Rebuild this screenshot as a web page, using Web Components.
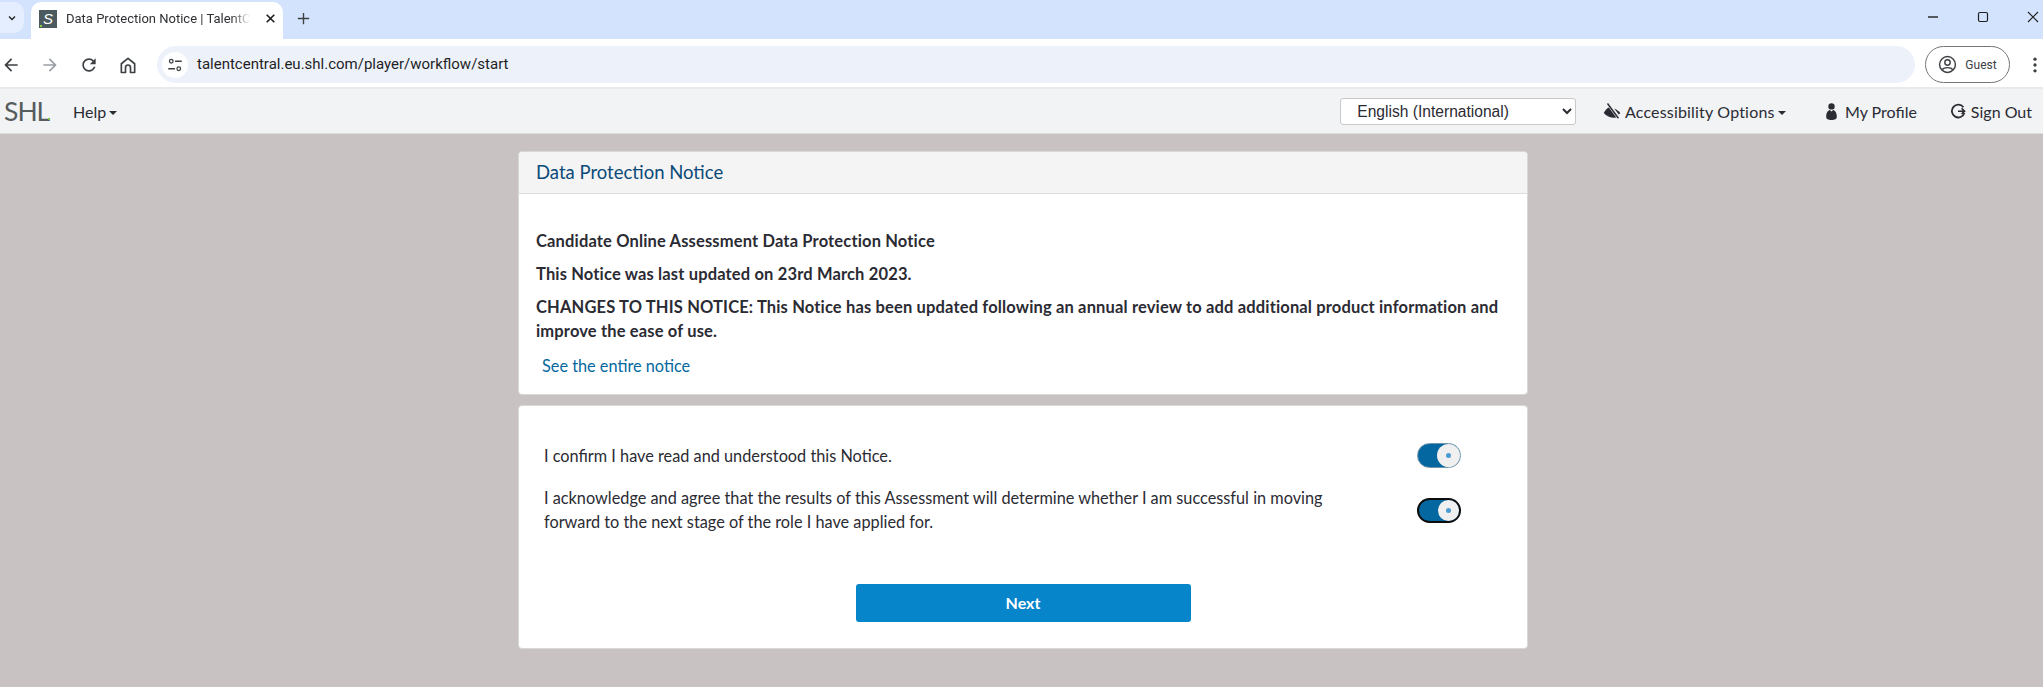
<!DOCTYPE html>
<html lang="en">
<head>
<meta charset="utf-8">
<title>Data Protection Notice | TalentCentral</title>
<style>
    html, body { margin: 0; height: 100%; }
    body {
        background: #c8c2c2;
        font-family: Lato, "Liberation Sans", sans-serif;
        color: #2b2b33;
        overflow: hidden;
    }
</style>
</head>
<body>
<browser-tabstrip title-text="Data Protection Notice | TalentC"></browser-tabstrip>
<browser-toolbar url="talentcentral.eu.shl.com/player/workflow/start"></browser-toolbar>
<shl-navbar></shl-navbar>
<notice-page>
    <notice-card heading="Data Protection Notice">
        <p class="strong">Candidate Online Assessment Data Protection Notice</p>
        <p class="strong">This Notice was last updated on 23rd March 2023.</p>
        <p class="strong">CHANGES TO THIS NOTICE: This Notice has been updated following an annual review to add additional product information and improve the ease of use.</p>
        <a class="more">See the entire notice</a>
    </notice-card>
    <consent-card>
        <consent-row>I confirm I have read and understood this Notice.</consent-row>
        <consent-row focused>I acknowledge and agree that the results of this Assessment will determine whether I am successful in moving forward to the next stage of the role I have applied for.</consent-row>
    </consent-card>
</notice-page>

<script>
// icons {{{1

const svg = (body, size = 24, box = '0 0 24 24') =>
    `<svg width="${size}" height="${size}" viewBox="${box}" aria-hidden="true">${body}</svg>`;

const ICONS = {
    chevron: svg('<path d="M6 9l6 6 6-6" fill="none" stroke="#1f1f1f" stroke-width="2.6"/>', 12),
    close: svg('<path d="M5 5l14 14M19 5L5 19" stroke="#1f1f1f" stroke-width="3"/>', 13),
    plus: svg('<path d="M12 3v18M3 12h18" stroke="#3c4043" stroke-width="2.2"/>', 15),
    minimize: svg('<path d="M1 6h10" stroke="#1f1f1f" stroke-width="1.4"/>', 12, '0 0 12 12'),
    maximize: svg('<rect x="1.5" y="1.5" width="9" height="9" rx="1.5" fill="none" stroke="#1f1f1f" stroke-width="1.2"/>', 12, '0 0 12 12'),
    winClose: svg('<path d="M1 1l10 10M11 1L1 11" stroke="#1f1f1f" stroke-width="1.1"/>', 12, '0 0 12 12'),
    back: svg('<path d="M20 11H7.83l5.59-5.59L12 4l-8 8 8 8 1.41-1.41L7.83 13H20v-2z" fill="#3c4043"/>', 20),
    forward: svg('<path d="M4 11h12.17l-5.59-5.59L12 4l8 8-8 8-1.41-1.41L16.17 13H4v-2z" fill="#9aa0a6"/>', 20),
    reload: svg('<path d="M17.65 6.35C16.2 4.9 14.21 4 12 4c-4.42 0-7.99 3.58-7.99 8s3.57 8 7.99 8c3.73 0 6.84-2.55 7.73-6h-2.08c-.82 2.33-3.04 4-5.65 4-3.31 0-6-2.69-6-6s2.69-6 6-6c1.66 0 3.14.69 4.22 1.78L13 11h7V4l-2.35 2.35z" fill="#3c4043"/>', 20),
    home: svg('<path d="M4 21V10.5L12 4l8 6.5V21h-5v-6a3 3 0 0 0-6 0v6z" fill="none" stroke="#3c4043" stroke-width="2" stroke-linejoin="round"/>', 20),
    tune: svg('<circle cx="7" cy="7" r="2.4" fill="none" stroke="#3c4043" stroke-width="1.7"/><path d="M12 7h9M3 17h9" stroke="#3c4043" stroke-width="1.9"/><circle cx="17" cy="17" r="2.4" fill="none" stroke="#3c4043" stroke-width="1.7"/>', 18),
    guest: svg('<circle cx="12" cy="12" r="10" fill="none" stroke="#3c4043" stroke-width="1.8"/><circle cx="12" cy="9.5" r="3.4" fill="none" stroke="#3c4043" stroke-width="1.8"/><path d="M5.5 18.5c2-3.4 11-3.4 13 0" fill="none" stroke="#3c4043" stroke-width="1.8"/>', 19),
    dots: svg('<circle cx="12" cy="5" r="2" fill="#3c4043"/><circle cx="12" cy="12" r="2" fill="#3c4043"/><circle cx="12" cy="19" r="2" fill="#3c4043"/>', 20),
    // slashed eye, the way the site draws it: heavy lens, slash standing off it
    eyeSlash: svg('<path d="M1 14.5C3.5 10 6 7.5 9 6.5l11 13.2c-1.6.8-3.2 1.3-5 1.3-5.6 0-10.6-2.6-14-6.5z" fill="#2b2b33"/><path d="M15 8.6c3.2 1.3 5.8 3.5 8 5.9-.5.8-1.3 1.6-2 2.2z" fill="#2b2b33"/><path d="M6.5 2.5l14 19" stroke="#f1f3f5" stroke-width="3.4"/><path d="M6 2l14.6 19.6" stroke="#2b2b33" stroke-width="1.9"/>', 18),
    person: svg('<circle cx="6" cy="3.2" r="3" fill="#2b2b33"/><path d="M1 13c0-4 1.6-6 3.4-6.4L6 8l1.6-1.4C9.4 7 11 9 11 13c0 2.4-2 3-5 3s-5-.6-5-3z" fill="#2b2b33"/>', 17, '0 0 12 16'),
    signOut: svg('<path d="M13.4 4.2A6.4 6.4 0 1 0 14.4 10" fill="none" stroke="#2b2b33" stroke-width="1.8"/><path d="M8 8.2h6.6M11.6 5.4l3 2.8-3 2.8" fill="none" stroke="#2b2b33" stroke-width="1.6"/>', 16, '0 0 16 16'),
};

// helper for the small boilerplate that every element shares
function defineElement(name, css, html, extra = {}) {
    const tpl = document.createElement('template');
    tpl.innerHTML = `<style>${css}</style>${html}`;
    class El extends HTMLElement {
        constructor() {
            super();
            this.attachShadow({ mode: 'open' });
            this.shadowRoot.appendChild(tpl.content.cloneNode(true));
        }
        connectedCallback() {
            if (extra.init) extra.init.call(this, this.shadowRoot);
        }
    }
    customElements.define(name, El);
}

// browser chrome {{{1

defineElement('browser-tabstrip', `
    :host {
        display: flex;
        align-items: flex-start;
        height: 39px;
        background: #d3e3fd;
        font-family: Roboto, sans-serif;
    }
    .tabs-btn {
        width: 24px;
        height: 31px;
        margin-top: 2px;
        border-radius: 0 10px 10px 0;
        background: #e4eefe;
        display: flex;
        align-items: center;
        justify-content: center;
    }
    .tab {
        box-sizing: border-box;
        width: 252px;
        height: 37px;
        margin: 2px 0 0 7px;
        padding: 0 11px 0 8px;
        background: #fff;
        border-radius: 10px 10px 0 0;
        display: flex;
        align-items: center;
        gap: 9px;
        padding-bottom: 4px;
    }
    .favicon {
        position: relative;
        flex: none;
        width: 18px;
        height: 18px;
        background: #4b5a5e;
        color: #fff;
        font: italic 15px/18px "Liberation Sans", sans-serif;
        text-align: center;
    }
    .favicon i {
        position: absolute;
        left: 1px;
        bottom: 1px;
        width: 2px;
        height: 2px;
        background: #8bd04a;
    }
    .title {
        flex: 1;
        font-size: 13px;
        color: #2f3033;
        white-space: nowrap;
        -webkit-mask-image: linear-gradient(to right, #000 90%, transparent);
        mask-image: linear-gradient(to right, #000 90%, transparent);
    }
    .close { display: flex; margin-left: 5px; }
    .plus { display: flex; margin: 11px 0 0 13px; }
    .spacer { flex: 1; }
    .win { display: flex; gap: 38px; margin: 11px 4px 0 0; }
`, `
    <div class="tabs-btn">${ICONS.chevron}</div>
    <div class="tab">
        <span class="favicon">S<i></i></span>
        <span class="title"></span>
        <span class="close">${ICONS.close}</span>
    </div>
    <span class="plus">${ICONS.plus}</span>
    <span class="spacer"></span>
    <span class="win">${ICONS.minimize}${ICONS.maximize}${ICONS.winClose}</span>
`, {
    init(root) { root.querySelector('.title').textContent = this.getAttribute('title-text'); }
});

defineElement('browser-toolbar', `
    :host {
        box-sizing: border-box;
        display: flex;
        align-items: center;
        height: 50px;
        padding: 3px 0 0 1px;
        background: #fff;
        border-bottom: 2px solid #e8e9eb;
        font-family: Roboto, sans-serif;
    }
    .nav { display: flex; gap: 19px; }
    .nav span { display: flex; }
    .omni {
        flex: 1;
        height: 37px;
        margin-left: 19px;
        border-radius: 19px;
        background: #edf2fa;
        display: flex;
        align-items: center;
        padding-left: 5px;
        font-size: 15px;
        color: #1f1f1f;
    }
    .site {
        width: 26px;
        height: 26px;
        border-radius: 50%;
        background: #fff;
        display: flex;
        align-items: center;
        justify-content: center;
        margin-right: 9px;
    }
    .url { padding-bottom: 2px; }
    .guest {
        box-sizing: border-box;
        width: 85px;
        height: 37px;
        margin-left: 10px;
        border: 1px solid #747775;
        border-radius: 19px;
        display: flex;
        align-items: center;
        justify-content: center;
        gap: 8px;
        font-size: 12px;
        color: #3c4043;
    }
    .dots { display: flex; margin: 0 -2px 0 15px; }
`, `
    <div class="nav">
        <span>${ICONS.back}</span><span>${ICONS.forward}</span><span>${ICONS.reload}</span><span>${ICONS.home}</span>
    </div>
    <div class="omni"><span class="site">${ICONS.tune}</span><span class="url"></span></div>
    <div class="guest">${ICONS.guest}<span>Guest</span></div>
    <span class="dots">${ICONS.dots}</span>
`, {
    init(root) { root.querySelector('.url').textContent = this.getAttribute('url'); }
});

// site header {{{1

defineElement('shl-navbar', `
    :host {
        box-sizing: border-box;
        display: flex;
        align-items: center;
        height: 45px;
        padding: 0 11px 0 4px;
        background: #f1f3f5;
        border-bottom: 1px solid #dcdcdc;
        font-size: 16px;
        color: #2b2b33;
    }
    .logo {
        position: relative;
        width: 46px;
        font: 400 26.5px/1 Lato, sans-serif;
        letter-spacing: -1px;
        color: #565b5e;
    }
    .logo i {
        position: absolute;
        right: 0;
        bottom: 4px;
        width: 2px;
        height: 2px;
        background: #7ac143;
    }
    .help { margin-left: 23px; }
    .caret {
        display: inline-block;
        margin-left: 3px;
        vertical-align: middle;
        border-top: 4px solid #2b2b33;
        border-left: 4px solid transparent;
        border-right: 4px solid transparent;
    }
    .spacer { flex: 1; }
    select {
        box-sizing: border-box;
        width: 236px;
        height: 27px;
        padding-left: 12px;
        border: 1px solid #c9c9c9;
        border-radius: 3px;
        background: #fff;
        font: 15.6px "Liberation Sans", sans-serif;
        color: #2b2b33;
    }
    .item { display: flex; align-items: center; gap: 5px; white-space: nowrap; }
    .item svg { flex: none; }
    .a11y { margin-left: 27px; gap: 3.7px; letter-spacing: 0.18px; }
    .profile { margin-left: 37.4px; }
    .signout { margin-left: 33px; }
`, `
    <span class="logo">SHL<i></i></span>
    <span class="help">Help<span class="caret"></span></span>
    <span class="spacer"></span>
    <select><option>English (International)</option></select>
    <span class="item a11y">${ICONS.eyeSlash}<span>Accessibility Options<span class="caret"></span></span></span>
    <span class="item profile">${ICONS.person}<span>My Profile</span></span>
    <span class="item signout">${ICONS.signOut}<span>Sign Out</span></span>
`);

// page content {{{1

defineElement('notice-page', `
    :host {
        display: flex;
        flex-direction: column;
        align-items: center;
        gap: 10px;
        padding: 17px 0 0 3px;
    }
`, `<slot></slot>`);

const CARD_CSS = `
    :host {
        box-sizing: border-box;
        display: block;
        width: 1010px;
        background: #fff;
        border: 1px solid #d8d8d8;
        border-radius: 4px;
    }
`;

defineElement('notice-card', CARD_CSS + `
    .head {
        box-sizing: border-box;
        height: 42px;
        padding: 0 17px;
        background: #f4f4f4;
        border-bottom: 1px solid #dddddd;
        border-radius: 4px 4px 0 0;
        font-size: 18.5px;
        line-height: 40px;
        color: #0b4a78;
    }
    .body {
        padding: 35px 17px 16px;
        font-size: 16.5px;
        line-height: 24px;
    }
    ::slotted(p) { margin: 0 0 9px; }
    ::slotted(p.strong) { font-weight: 700; letter-spacing: 0.15px; }
    ::slotted(a.more) {
        display: block;
        margin-top: 11px;
        padding-left: 6px;
        font-size: 16.3px;
        color: #0668a0;
    }
`, `
    <div class="head"></div>
    <div class="body"><slot></slot></div>
`, {
    init(root) { root.querySelector('.head').textContent = this.getAttribute('heading'); }
});

defineElement('consent-card', CARD_CSS + `
    :host { padding: 37px 66px 26px 25px; }
    .rows { display: flex; flex-direction: column; gap: 18px; }
    .actions { display: flex; justify-content: center; margin: 50px -41px 0 0; }
    .next {
        box-sizing: border-box;
        width: 335px;
        height: 38px;
        padding: 0 0 2px;
        border: 0;
        border-radius: 3px;
        background: #0685cb;
        color: #fff;
        font: 700 16px Lato, sans-serif;
    }
`, `
    <div class="rows"><slot></slot></div>
    <div class="actions"><button class="next">Next</button></div>
`);

defineElement('consent-row', `
    :host {
        display: flex;
        align-items: center;
        justify-content: space-between;
        font-size: 16.3px;
        line-height: 24px;
    }
    .label { width: 815px; }
`, `
    <span class="label"><slot></slot></span>
    <toggle-switch></toggle-switch>
`, {
    init(root) {
        if (this.hasAttribute('focused'))
            root.querySelector('toggle-switch').setAttribute('focused', '');
    }
});

defineElement('toggle-switch', `
    :host {
        box-sizing: border-box;
        display: block;
        position: relative;
        flex: none;
        width: 44px;
        height: 25px;
        border-radius: 13px;
        border: 1px solid #6f93aa;
        background: linear-gradient(to right, #04679f 60%, #0a6ea8);
    }
    :host([focused]) { border: 2px solid #0d0d0d; }
    .knob {
        position: absolute;
        top: 0;
        bottom: 0;
        right: 0;
        aspect-ratio: 1;
        border-radius: 50%;
        background: #f0f0f0;
        display: flex;
        align-items: center;
        justify-content: center;
    }
    .knob i {
        width: 5px;
        height: 5px;
        border-radius: 50%;
        background: #4a9bd0;
    }
`, `<span class="knob"><i></i></span>`);
</script>
</body>
</html>
